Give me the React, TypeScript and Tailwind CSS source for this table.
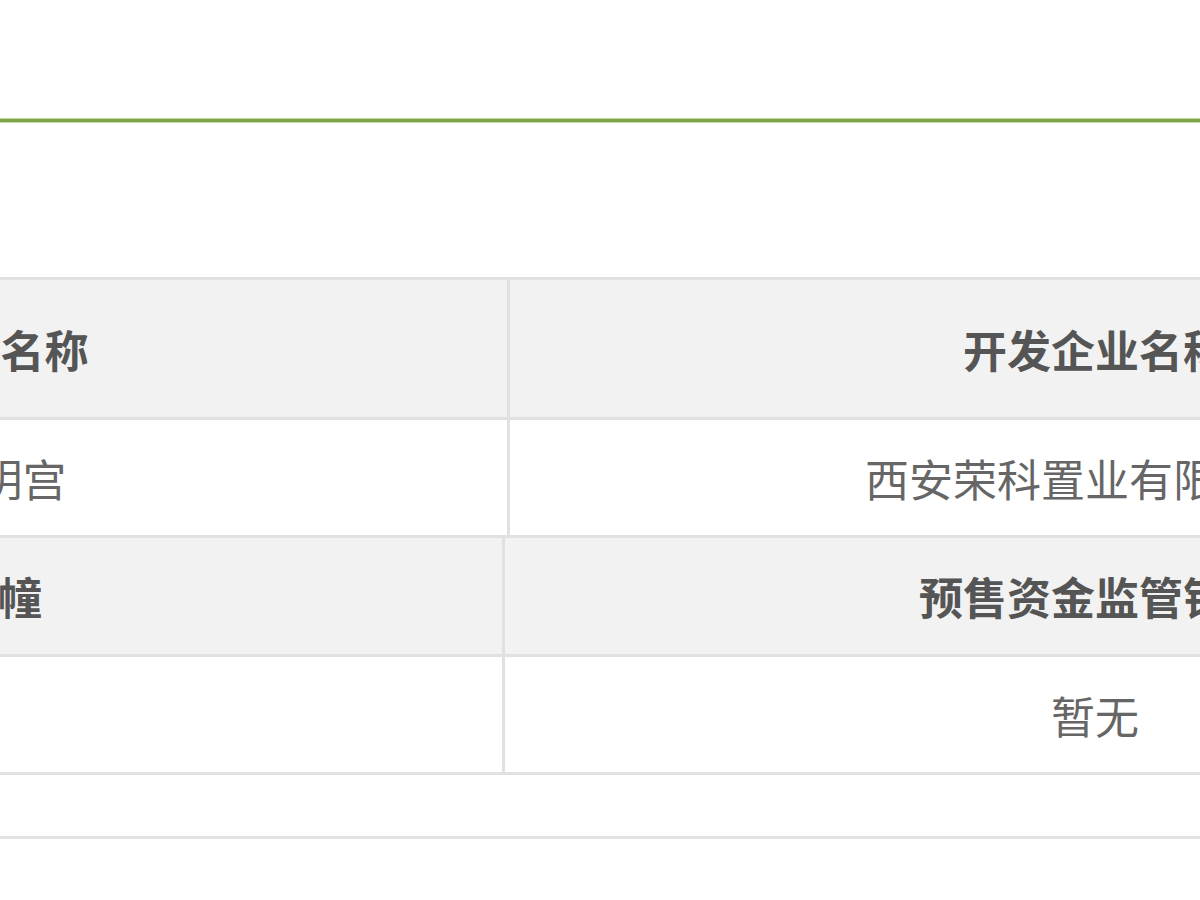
const font = { fontFamily: '"Noto Sans CJK SC", "Noto Sans", sans-serif' };

function Cell({ w, text, head, last }: { w: string; text: string; head?: boolean; last?: boolean }) {
  return (
    <div
      className={
        'flex shrink-0 items-center justify-center whitespace-nowrap text-[44px] ' +
        w +
        (last ? '' : ' border-r-[3px] border-[#e1e1e1]') +
        (head ? ' font-bold text-[#555555]' : ' text-[#666666]')
      }
    >
      {text}
    </div>
  );
}

export default function App() {
  return (
    <div className="h-[900px] w-[1200px] overflow-hidden bg-white" style={font}>
      <div className="h-[118px]" />
      <div className="h-[1px] bg-[#c4dba8]" />
      <div className="h-[3px] bg-[#7aa649]" />
      <div className="h-[1px] bg-[#c4dba8]" />
      <div className="h-[154px]" />

      <div className="ml-[-506px] w-[2400px]">
        {/* first table */}
        <div className="border-t-[3px] border-[#e1e1e1]">
          <div className="flex h-[140px] border-b-[3px] border-[#e1e1e1] bg-[#f2f2f2]">
            <Cell w="w-[1016px]" text="项目名称" head />
            <Cell w="w-[1170px]" text="开发企业名称" head last />
          </div>
          <div className="flex h-[118px] border-b-[3px] border-[#e1e1e1]">
            <Cell w="w-[1016px]" text="大明宫" />
            <Cell w="w-[1150px]" text="西安荣科置业有限公司" last />
          </div>
        </div>

        {/* second table */}
        <div>
          <div className="flex h-[119px] border-b-[3px] border-[#e1e1e1] bg-[#f2f2f2]">
            <Cell w="w-[1011px]" text="楼幢" head />
            <Cell w="w-[1180px]" text="预售资金监管银行" head last />
          </div>
          <div className="flex h-[118px] border-b-[3px] border-[#e1e1e1]">
            <Cell w="w-[1011px]" text="" />
            <Cell w="w-[1180px]" text="暂无" last />
          </div>
        </div>
      </div>

      <div className="h-[61px]" />
      <div className="h-[3px] bg-[#e3e3e3]" />
    </div>
  );
}
